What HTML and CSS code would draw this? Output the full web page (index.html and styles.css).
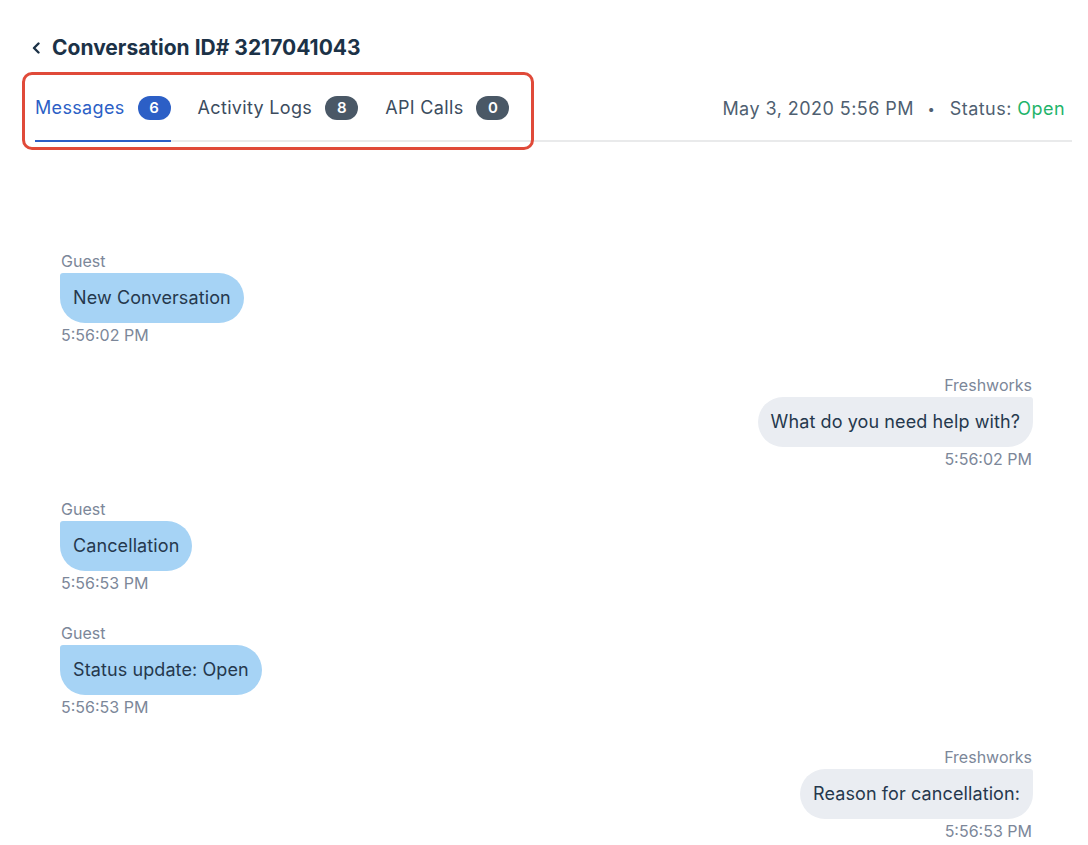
FILE: index.html
```html
<!DOCTYPE html>
<html lang="en">
<head>
<meta charset="utf-8">
<title>Conversation ID# 3217041043</title>
<link rel="stylesheet" href="styles.css">
</head>
<body>
<div class="page">
  <div class="title-row">
    <svg class="back" width="9" height="12" viewBox="0 0 9 12"><path d="M6.5 1.5 L2 6 L6.5 10.5" fill="none" stroke="#1c3247" stroke-width="2.4" stroke-linecap="round" stroke-linejoin="round"/></svg>
    <h1 class="title">Conversation ID# 3217041043</h1>
  </div>
  <div class="tabs-row">
    <div class="tabs">
      <div class="tab active"><span class="tab-label">Messages</span><span class="badge">6</span></div>
      <div class="tab"><span class="tab-label">Activity Logs</span><span class="badge">8</span></div>
      <div class="tab"><span class="tab-label">API Calls</span><span class="badge">0</span></div>
    </div>
    <div class="meta">May 3, 2020 5:56 PM <span class="dot">•</span> Status: <span class="open">Open</span></div>
    <div class="highlight"></div>
  </div>
  <div class="messages">
    <div class="msg guest">
      <div class="who">Guest</div>
      <div class="bubble">New Conversation</div>
      <div class="time">5:56:02 PM</div>
    </div>
    <div class="msg agent">
      <div class="who">Freshworks</div>
      <div class="bubble">What do you need help with?</div>
      <div class="time">5:56:02 PM</div>
    </div>
    <div class="msg guest">
      <div class="who">Guest</div>
      <div class="bubble">Cancellation</div>
      <div class="time">5:56:53 PM</div>
    </div>
    <div class="msg guest">
      <div class="who">Guest</div>
      <div class="bubble">Status update: Open</div>
      <div class="time">5:56:53 PM</div>
    </div>
    <div class="msg agent">
      <div class="who">Freshworks</div>
      <div class="bubble">Reason for cancellation:</div>
      <div class="time">5:56:53 PM</div>
    </div>
  </div>
</div>
</body>
</html>
```

FILE: styles.css
```css
* { box-sizing: border-box; }
html, body { margin: 0; padding: 0; background: #fff; }
body {
  font-family: Inter, "Noto Sans", "Liberation Sans", sans-serif;
  color: #1c3247;
  overflow: hidden;
}
.page {
  padding: 33px 16px 0 35px;
}
.title-row {
  display: flex;
  align-items: center;
  height: 30px;
  margin-left: -3px;
}
.back { margin-right: 11px; }
.title {
  margin: 0;
  font-size: 21px;
  font-weight: 700;
  line-height: 30px;
  color: #1c3247;
}
.tabs-row {
  position: relative;
  margin-top: 15px;
  display: flex;
  justify-content: space-between;
  align-items: center;
  border-bottom: 2px solid #e9eaeb;
  padding-right: 7px;
}
.tabs { display: flex; gap: 27px; }
.tab {
  display: flex;
  align-items: center;
  gap: 13px;
  padding: 18px 0 20px;
  border-bottom: 2px solid transparent;
  margin-bottom: -2px;
  font-size: 18px;
  letter-spacing: 0.33px;
  line-height: 24px;
  color: #3c4c5e;
}
.tab.active { color: #2c5fc6; border-bottom-color: #2c5fc6; }
.badge {
  display: inline-flex;
  align-items: center;
  justify-content: center;
  min-width: 33px;
  height: 24px;
  border-radius: 12px;
  background: #4a5866;
  color: #fff;
  font-size: 15px;
  font-weight: 600;
  letter-spacing: 0;
}
.tab.active .badge { background: #2c5fc6; }
.meta {
  font-size: 18px;
  letter-spacing: 0.45px;
  color: #4f5f71;
  line-height: 24px;
}
.dot { margin: 0 9px 0 8px; font-size: 13px; vertical-align: 1px; }
.open { color: #1fb46b; }
.highlight {
  position: absolute;
  left: -13px;
  top: -6px;
  width: 512px;
  height: 78px;
  border: 3px solid #e04a39;
  border-radius: 10px;
  pointer-events: none;
}
.messages {
  padding: 110px 39px 0 25px;
  display: flex;
  flex-direction: column;
  gap: 32px;
}
.msg { display: flex; flex-direction: column; }
.msg.guest { align-items: flex-start; }
.msg.agent { align-items: flex-end; }
.who, .time {
  font-size: 16px;
  line-height: 18px;
  color: #7c8799;
  padding: 0 1px;
}
.bubble {
  margin: 3px 0;
  height: 50px;
  line-height: 50px;
  padding: 0 13px;
  font-size: 18px;
  letter-spacing: 0.1px;
  color: #25384d;
  white-space: nowrap;
}
.guest .bubble { background: #a6d3f5; border-radius: 3px 25px 25px 25px; }
.agent .bubble { background: #eaedf2; border-radius: 25px 3px 25px 25px; }
```
